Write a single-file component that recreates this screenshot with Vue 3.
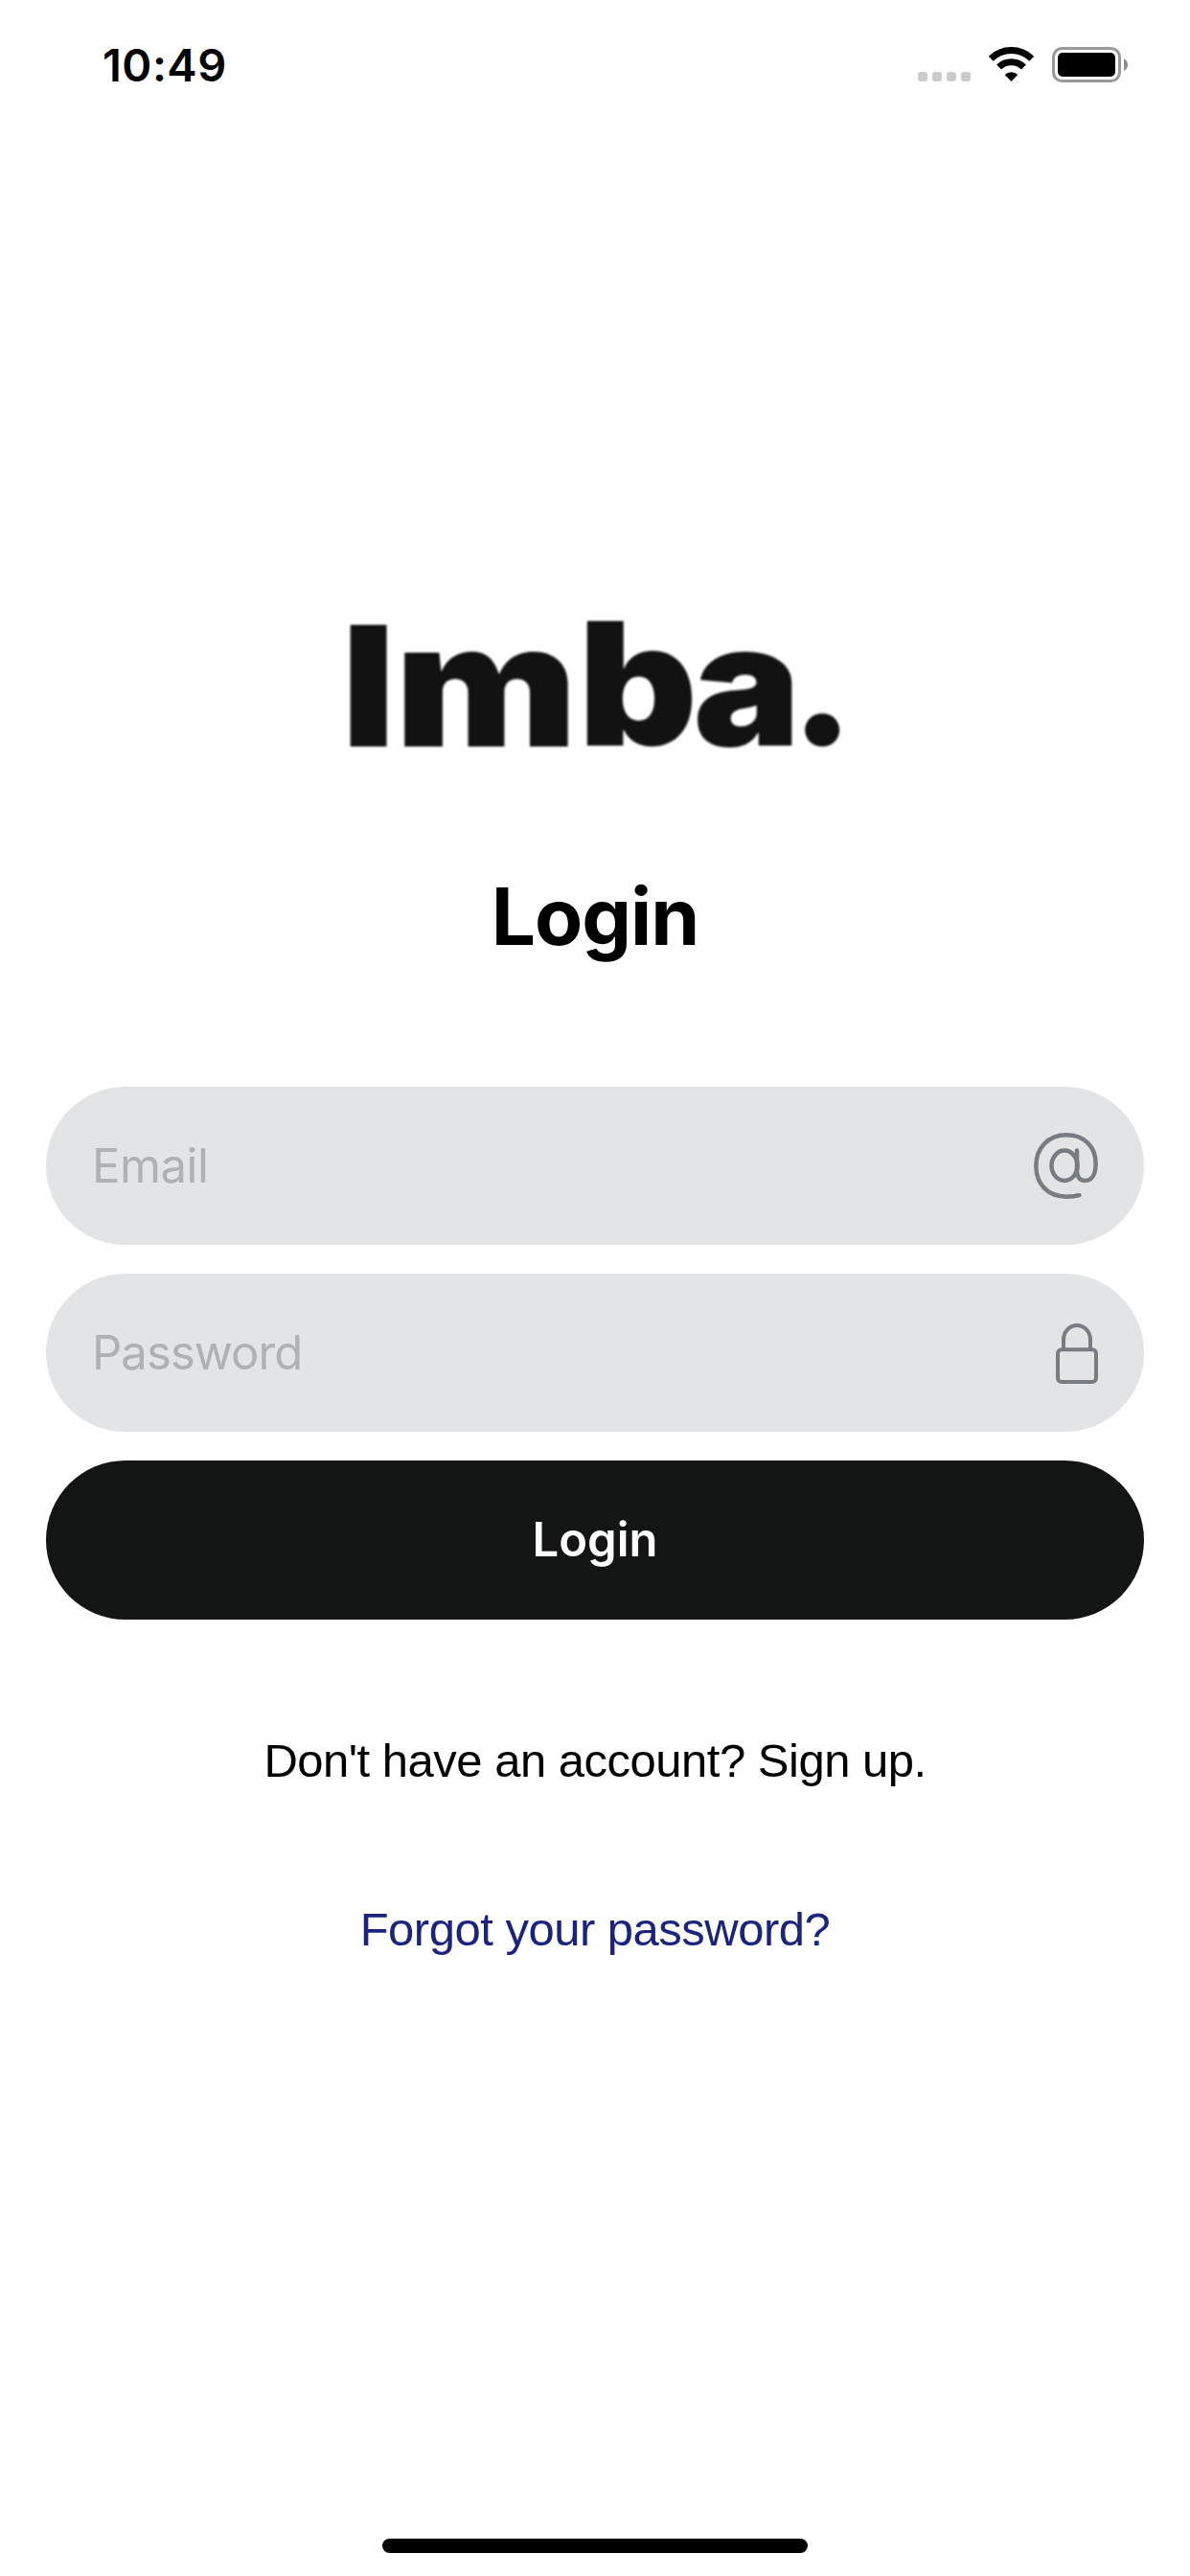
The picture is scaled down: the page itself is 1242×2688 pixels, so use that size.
<script setup>
const wordmark = [
  { char: 'I', transform: 'translate(-8.3 132) scale(1.1 1)' },
  { char: 'm', transform: 'translate(47.2 132) scale(1.16 1.03)' },
  { char: 'b', transform: 'translate(238.2 130.5) scale(1.11 1.03)' },
  { char: 'a', transform: 'translate(358.6 130.5) scale(1.08 1.02)' },
  { char: '.', transform: 'translate(459.8 129.5) scale(1.03 1)' },
]
</script>

<template>
  <div class="screen">
    <header class="status">
      <span class="time">10:49</span>
      <svg class="indicators" width="221" height="38" viewBox="0 0 221 38">
        <g fill="#cbcbcb">
          <rect x="0" y="27" width="10" height="10" rx="3" />
          <rect x="15" y="27" width="10" height="10" rx="3" />
          <rect x="30" y="27" width="10" height="10" rx="3" />
          <rect x="45" y="27" width="10" height="10" rx="3" />
        </g>
        <g fill="none" stroke="#000" stroke-width="7">
          <path d="M76.200 13.200A30.500 30.500 0 0 1 118.800 13.200" />
          <path d="M84.600 22A18.300 18.300 0 0 1 110.400 22" />
        </g>
        <path d="M97.500 37L90.700 30.100A9.700 9.700 0 0 1 104.300 30.100Z" />
        <rect x="141.500" y="2.500" width="69" height="34" rx="9" fill="none" stroke="#999" stroke-width="3" />
        <rect x="146" y="7" width="60" height="25" rx="5" />
        <path d="M215 13.200Q219 15.500 219 19.500T215 26Z" fill="#8c8c8c" />
      </svg>
    </header>

    <main class="content">
      <svg class="logo" width="512" height="132" viewBox="0 0 512 132" role="img" aria-label="Imba.">
        <text v-for="glyph in wordmark" :key="glyph.char" :transform="glyph.transform">{{ glyph.char }}</text>
      </svg>
      <h1 class="title">Login</h1>

      <form class="form" @submit.prevent>
        <label class="field">
          <span class="placeholder">Email</span>
          <svg width="68" height="70" viewBox="0 0 68 70" class="icon at">
            <ellipse cx="33" cy="34.300" rx="13.500" ry="15.700" />
            <path d="M46 18.500V40C46 47 50 50 54.500 50C62 50 65.600 43 65.600 32C65.600 14 53 2.300 35 2.300C16 2.300 3.300 16 3.300 34.500C3.300 54 16 66.700 35 66.700Q43 66.700 48.500 65.200" />
          </svg>
        </label>
        <label class="field">
          <span class="placeholder password">Password</span>
          <svg width="44" height="63" viewBox="0 0 44 63" class="icon lock">
            <rect x="2" y="27.200" width="40" height="33.800" rx="4" />
            <path d="M8 27V17A14 15 0 0 1 36 17V27" />
          </svg>
        </label>
        <button class="button" type="submit">Login</button>
      </form>

      <a class="link signup">Don't have an account? Sign up.</a>
      <a class="link forgot">Forgot your password?</a>
    </main>

    <div class="home-bar"></div>
  </div>
</template>

<style>
body {
  background: #fff;
}
</style>

<style scoped>
.screen {
  display: flex;
  flex-direction: column;
  align-items: center;
  box-sizing: border-box;
  width: 1242px;
  height: 2688px;
  padding-bottom: 24px;
  overflow: hidden;
  color: #000;
  background: #fff;
  font-family: Inter, "Liberation Sans", sans-serif;
}
.status {
  display: flex;
  justify-content: space-between;
  align-items: flex-start;
  box-sizing: border-box;
  width: 100%;
  height: 132px;
  padding: 48px 63px 0 107px;
}
.time {
  font-size: 47px;
  font-weight: 600;
  line-height: 40px;
  letter-spacing: 0.5px;
}
.content {
  display: flex;
  flex-direction: column;
  align-items: center;
  flex: 1;
  width: 1146px;
  padding-top: 515px;
}
.logo {
  display: block;
  flex: none;
  overflow: visible;
  fill: #121212;
  font-size: 174px;
  font-weight: 900;
  filter: blur(1px);
}
.title {
  margin: 128px 0 0;
  font-size: 82px;
  font-weight: 700;
  line-height: 100px;
  letter-spacing: -1px;
}
.form {
  display: flex;
  flex-direction: column;
  gap: 30px;
  width: 100%;
  margin-top: 127px;
}
.field {
  display: flex;
  justify-content: space-between;
  align-items: center;
  box-sizing: border-box;
  height: 165px;
  padding: 0 48px;
  border-radius: 83px;
  background: #e3e4e6;
}
.placeholder {
  color: #b0b1b3;
  font-size: 49px;
  line-height: 60px;
  letter-spacing: -0.45px;
}
.password {
  letter-spacing: -0.93px;
}
.icon {
  fill: none;
  stroke: #777c82;
  stroke-width: 4;
  stroke-linecap: round;
}
.at {
  stroke-width: 4.5;
}
.lock {
  margin-top: 2px;
}
.button {
  height: 166px;
  padding: 0;
  border: 0;
  border-radius: 83px;
  color: #fff;
  background: #131514;
  font: 600 49px/60px Inter, sans-serif;
}
.link {
  font-family: "Liberation Sans", Arial, sans-serif;
  font-size: 49px;
  line-height: 56px;
  letter-spacing: -0.5px;
}
.signup {
  margin-top: 119px;
}
.forgot {
  margin-top: 120px;
  color: #1a237e;
}
.home-bar {
  width: 444px;
  height: 15px;
  border-radius: 8px;
  background: #000;
}
</style>
